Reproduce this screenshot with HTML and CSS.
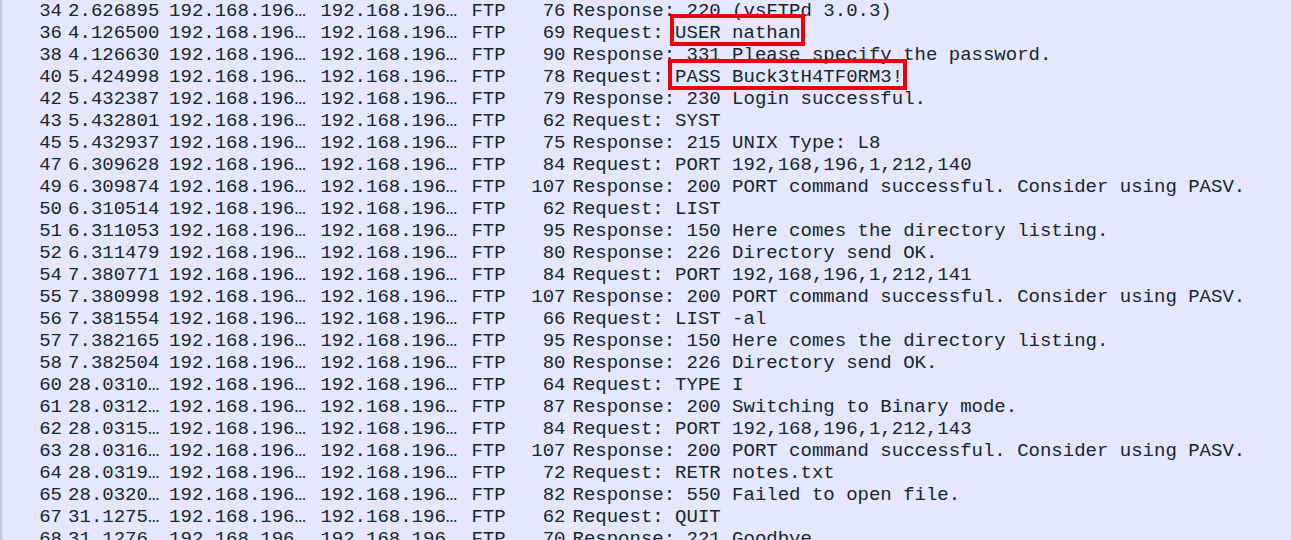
FILE: index.html
```html
<!DOCTYPE html>
<html>
<head>
<meta charset="utf-8">
<link rel="stylesheet" href="styles.css">
</head>
<body>
<div class="packets">
  <div class="row"><span class="no">34</span><span class="time">2.626895</span><span class="src">192.168.196…</span><span class="dst">192.168.196…</span><span class="proto">FTP</span><span class="len">76</span><span class="info">Response: 220 (vsFTPd 3.0.3)</span></div>
  <div class="row"><span class="no">36</span><span class="time">4.126500</span><span class="src">192.168.196…</span><span class="dst">192.168.196…</span><span class="proto">FTP</span><span class="len">69</span><span class="info">Request: <span class="hl hl-user">USER nathan</span></span></div>
  <div class="row"><span class="no">38</span><span class="time">4.126630</span><span class="src">192.168.196…</span><span class="dst">192.168.196…</span><span class="proto">FTP</span><span class="len">90</span><span class="info">Response: 331 Please specify the password.</span></div>
  <div class="row"><span class="no">40</span><span class="time">5.424998</span><span class="src">192.168.196…</span><span class="dst">192.168.196…</span><span class="proto">FTP</span><span class="len">78</span><span class="info">Request: <span class="hl hl-pass">PASS Buck3tH4TF0RM3!</span></span></div>
  <div class="row"><span class="no">42</span><span class="time">5.432387</span><span class="src">192.168.196…</span><span class="dst">192.168.196…</span><span class="proto">FTP</span><span class="len">79</span><span class="info">Response: 230 Login successful.</span></div>
  <div class="row"><span class="no">43</span><span class="time">5.432801</span><span class="src">192.168.196…</span><span class="dst">192.168.196…</span><span class="proto">FTP</span><span class="len">62</span><span class="info">Request: SYST</span></div>
  <div class="row"><span class="no">45</span><span class="time">5.432937</span><span class="src">192.168.196…</span><span class="dst">192.168.196…</span><span class="proto">FTP</span><span class="len">75</span><span class="info">Response: 215 UNIX Type: L8</span></div>
  <div class="row"><span class="no">47</span><span class="time">6.309628</span><span class="src">192.168.196…</span><span class="dst">192.168.196…</span><span class="proto">FTP</span><span class="len">84</span><span class="info">Request: PORT 192,168,196,1,212,140</span></div>
  <div class="row"><span class="no">49</span><span class="time">6.309874</span><span class="src">192.168.196…</span><span class="dst">192.168.196…</span><span class="proto">FTP</span><span class="len">107</span><span class="info">Response: 200 PORT command successful. Consider using PASV.</span></div>
  <div class="row"><span class="no">50</span><span class="time">6.310514</span><span class="src">192.168.196…</span><span class="dst">192.168.196…</span><span class="proto">FTP</span><span class="len">62</span><span class="info">Request: LIST</span></div>
  <div class="row"><span class="no">51</span><span class="time">6.311053</span><span class="src">192.168.196…</span><span class="dst">192.168.196…</span><span class="proto">FTP</span><span class="len">95</span><span class="info">Response: 150 Here comes the directory listing.</span></div>
  <div class="row"><span class="no">52</span><span class="time">6.311479</span><span class="src">192.168.196…</span><span class="dst">192.168.196…</span><span class="proto">FTP</span><span class="len">80</span><span class="info">Response: 226 Directory send OK.</span></div>
  <div class="row"><span class="no">54</span><span class="time">7.380771</span><span class="src">192.168.196…</span><span class="dst">192.168.196…</span><span class="proto">FTP</span><span class="len">84</span><span class="info">Request: PORT 192,168,196,1,212,141</span></div>
  <div class="row"><span class="no">55</span><span class="time">7.380998</span><span class="src">192.168.196…</span><span class="dst">192.168.196…</span><span class="proto">FTP</span><span class="len">107</span><span class="info">Response: 200 PORT command successful. Consider using PASV.</span></div>
  <div class="row"><span class="no">56</span><span class="time">7.381554</span><span class="src">192.168.196…</span><span class="dst">192.168.196…</span><span class="proto">FTP</span><span class="len">66</span><span class="info">Request: LIST -al</span></div>
  <div class="row"><span class="no">57</span><span class="time">7.382165</span><span class="src">192.168.196…</span><span class="dst">192.168.196…</span><span class="proto">FTP</span><span class="len">95</span><span class="info">Response: 150 Here comes the directory listing.</span></div>
  <div class="row"><span class="no">58</span><span class="time">7.382504</span><span class="src">192.168.196…</span><span class="dst">192.168.196…</span><span class="proto">FTP</span><span class="len">80</span><span class="info">Response: 226 Directory send OK.</span></div>
  <div class="row"><span class="no">60</span><span class="time">28.0310…</span><span class="src">192.168.196…</span><span class="dst">192.168.196…</span><span class="proto">FTP</span><span class="len">64</span><span class="info">Request: TYPE I</span></div>
  <div class="row"><span class="no">61</span><span class="time">28.0312…</span><span class="src">192.168.196…</span><span class="dst">192.168.196…</span><span class="proto">FTP</span><span class="len">87</span><span class="info">Response: 200 Switching to Binary mode.</span></div>
  <div class="row"><span class="no">62</span><span class="time">28.0315…</span><span class="src">192.168.196…</span><span class="dst">192.168.196…</span><span class="proto">FTP</span><span class="len">84</span><span class="info">Request: PORT 192,168,196,1,212,143</span></div>
  <div class="row"><span class="no">63</span><span class="time">28.0316…</span><span class="src">192.168.196…</span><span class="dst">192.168.196…</span><span class="proto">FTP</span><span class="len">107</span><span class="info">Response: 200 PORT command successful. Consider using PASV.</span></div>
  <div class="row"><span class="no">64</span><span class="time">28.0319…</span><span class="src">192.168.196…</span><span class="dst">192.168.196…</span><span class="proto">FTP</span><span class="len">72</span><span class="info">Request: RETR notes.txt</span></div>
  <div class="row"><span class="no">65</span><span class="time">28.0320…</span><span class="src">192.168.196…</span><span class="dst">192.168.196…</span><span class="proto">FTP</span><span class="len">82</span><span class="info">Response: 550 Failed to open file.</span></div>
  <div class="row"><span class="no">67</span><span class="time">31.1275…</span><span class="src">192.168.196…</span><span class="dst">192.168.196…</span><span class="proto">FTP</span><span class="len">62</span><span class="info">Request: QUIT</span></div>
  <div class="row"><span class="no">68</span><span class="time">31.1276…</span><span class="src">192.168.196…</span><span class="dst">192.168.196…</span><span class="proto">FTP</span><span class="len">70</span><span class="info">Response: 221 Goodbye.</span></div>
</div>
</body>
</html>
```

FILE: styles.css
```css
html, body {
  margin: 0;
  padding: 0;
  background: #e7e6ff;
  overflow: hidden;
}

.packets {
  height: 540px;
  overflow: hidden;
  border-left: 2px solid #c8c8d6;
  background: #e7e6ff;
  color: #12272e;
  font-family: "Liberation Mono", "DejaVu Sans Mono", monospace;
  font-size: 19px;
  line-height: 22px;
  white-space: nowrap;
}

.row {
  display: grid;
  grid-template-columns: 60px 107.1px 151.3px 151px 47.6px 46.5px 1fr;
  height: 22px;
}

.row > span {
  white-space: pre;
}

.no, .len {
  text-align: right;
}

.time {
  padding-left: 6.1px;
}

.info {
  padding-left: 7px;
}

.hl {
  position: relative;
}

.hl::after {
  content: "";
  position: absolute;
  border: 4px solid #e8000b;
}

.hl-user::after {
  left: -5px;
  right: -4.5px;
  top: -8px;
  bottom: -2px;
}

.hl-pass::after {
  left: -7.5px;
  right: -4px;
  top: -7px;
  bottom: -2px;
}
```
